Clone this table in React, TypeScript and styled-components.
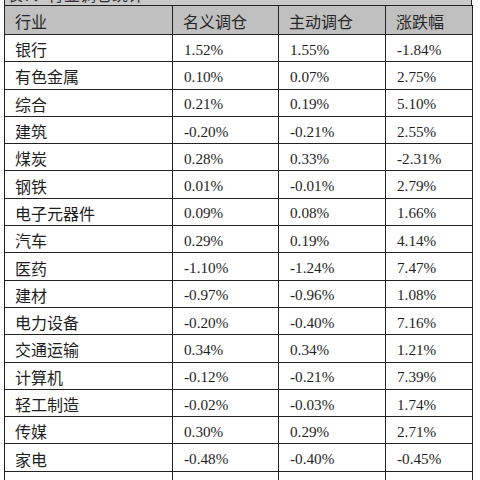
import React from "react";
import styled, { createGlobalStyle } from "styled-components";

const GlobalStyle = createGlobalStyle`
  html, body {
    margin: 0;
    padding: 0;
    background: #ffffff;
  }
  body {
    font-family: "Liberation Serif", "Noto Sans CJK SC", serif;
    color: #1e1e1e;
    overflow: hidden;
  }
`;

const Page = styled.div`
  width: 480px;
  height: 480px;
  overflow: hidden;
  padding-left: 4px;
  box-sizing: border-box;
`;

const TitleBand = styled.div`
  width: 468px;
  height: 5px;
  box-sizing: border-box;
  background: #c9c9c9;
  border-left: 1px solid #222;
  border-right: 1px solid #222;
  overflow: hidden;
`;

const TitleText = styled.div`
  margin-top: -14px;
  padding-left: 2px;
  font-family: "Noto Sans CJK SC", sans-serif;
  font-size: 16px;
  line-height: 17px;
  color: #333;
`;

const Table = styled.table`
  width: 468px;
  border-collapse: collapse;
  table-layout: fixed;
`;

const HeadCell = styled.th`
  background: #c0c0c0;
  border: 1px solid #222;
  height: 27px;
  padding: 1px 0 0 10px;
  text-align: left;
  font-weight: normal;
  font-family: "Noto Sans CJK SC", sans-serif;
  font-size: 16px;
  line-height: 18px;
  color: #262626;
  white-space: nowrap;
`;

const Cell = styled.td<{ $num?: boolean }>`
  border: 1px solid #222;
  height: 27.3px;
  padding: ${(p) => (p.$num ? "3px 0 0 11px" : "2px 0 0 10px")};
  font-family: ${(p) =>
    p.$num
      ? `"Liberation Serif", serif`
      : `"Noto Sans CJK SC", sans-serif`};
  font-size: ${(p) => (p.$num ? "15.2px" : "16px")};
  line-height: 18px;
  color: #1e1e1e;
  white-space: nowrap;
  box-sizing: border-box;
`;

const rows: [string, string, string, string][] = [
  ["银行", "1.52%", "1.55%", "-1.84%"],
  ["有色金属", "0.10%", "0.07%", "2.75%"],
  ["综合", "0.21%", "0.19%", "5.10%"],
  ["建筑", "-0.20%", "-0.21%", "2.55%"],
  ["煤炭", "0.28%", "0.33%", "-2.31%"],
  ["钢铁", "0.01%", "-0.01%", "2.79%"],
  ["电子元器件", "0.09%", "0.08%", "1.66%"],
  ["汽车", "0.29%", "0.19%", "4.14%"],
  ["医药", "-1.10%", "-1.24%", "7.47%"],
  ["建材", "-0.97%", "-0.96%", "1.08%"],
  ["电力设备", "-0.20%", "-0.40%", "7.16%"],
  ["交通运输", "0.34%", "0.34%", "1.21%"],
  ["计算机", "-0.12%", "-0.21%", "7.39%"],
  ["轻工制造", "-0.02%", "-0.03%", "1.74%"],
  ["传媒", "0.30%", "0.29%", "2.71%"],
  ["家电", "-0.48%", "-0.40%", "-0.45%"],
  ["", "", "", ""],
];

const App: React.FC = () => {
  return (
    <>
      <GlobalStyle />
      <Page>
        <TitleBand>
          <TitleText>表7：行业调仓统计</TitleText>
        </TitleBand>
        <Table>
          <colgroup>
            <col style={{ width: 168 }} />
            <col style={{ width: 106 }} />
            <col style={{ width: 107 }} />
            <col style={{ width: 87 }} />
          </colgroup>
          <thead>
            <tr>
              <HeadCell>行业</HeadCell>
              <HeadCell>名义调仓</HeadCell>
              <HeadCell>主动调仓</HeadCell>
              <HeadCell>涨跌幅</HeadCell>
            </tr>
          </thead>
          <tbody>
            {rows.map((r, i) => (
              <tr key={i}>
                <Cell>{r[0]}</Cell>
                <Cell $num>{r[1]}</Cell>
                <Cell $num>{r[2]}</Cell>
                <Cell $num>{r[3]}</Cell>
              </tr>
            ))}
          </tbody>
        </Table>
      </Page>
    </>
  );
};

export default App;
